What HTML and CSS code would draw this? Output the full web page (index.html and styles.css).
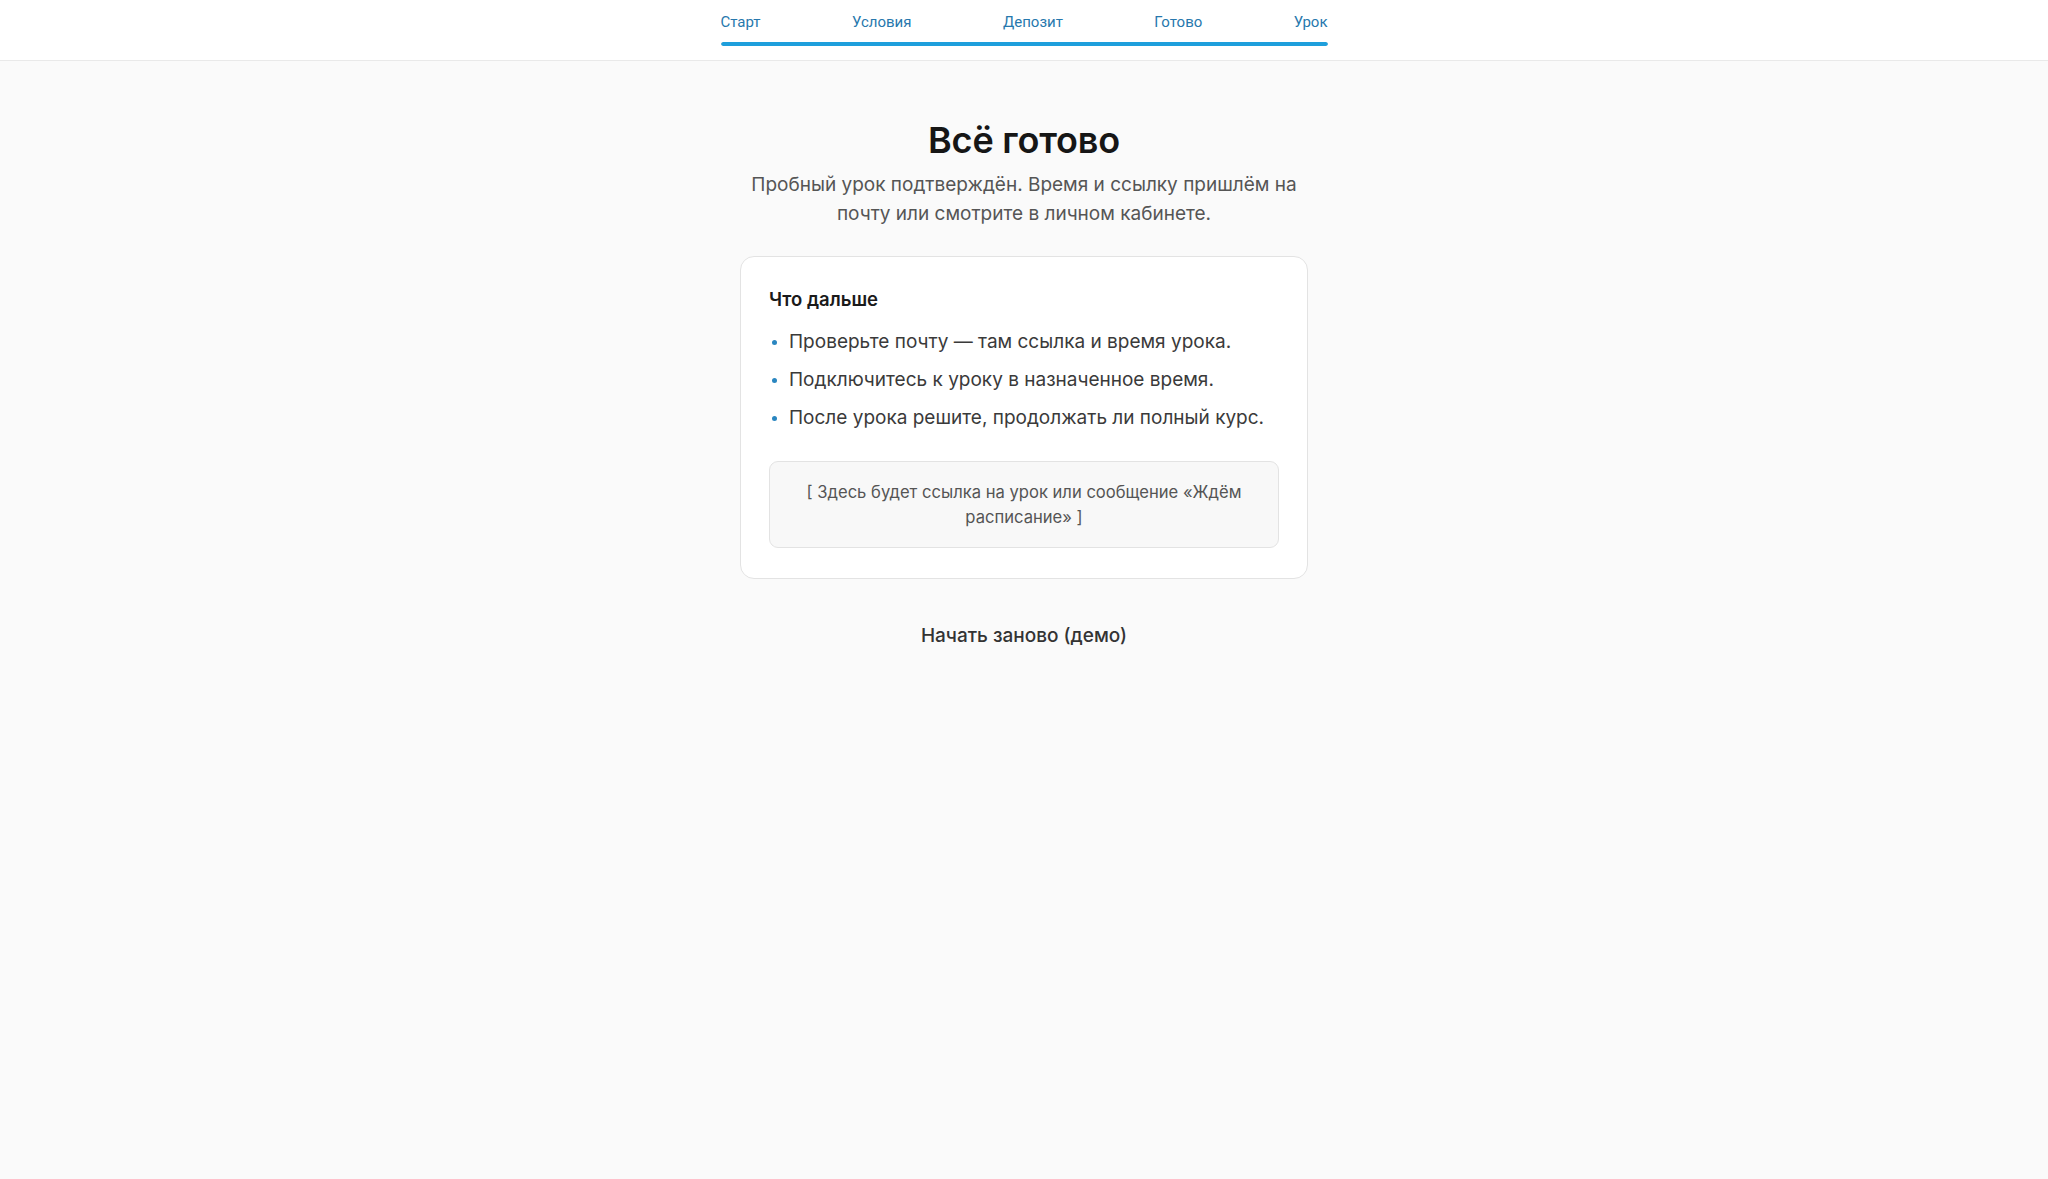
FILE: index.html
```html
<!DOCTYPE html>
<html lang="ru">
<head>
<meta charset="utf-8">
<title>Всё готово</title>
<link rel="stylesheet" href="styles.css">
</head>
<body>
<header class="topbar">
  <nav class="steps">
    <div class="step-labels">
      <span class="step">Старт</span>
      <span class="step">Условия</span>
      <span class="step">Депозит</span>
      <span class="step">Готово</span>
      <span class="step">Урок</span>
    </div>
    <div class="progress"><div class="progress-fill"></div></div>
  </nav>
</header>
<main class="page">
  <h1 class="title">Всё готово</h1>
  <p class="subtitle">Пробный урок подтверждён. Время и ссылку пришлём на почту или смотрите в личном кабинете.</p>
  <section class="card">
    <h2 class="card-title">Что дальше</h2>
    <ul class="next-list">
      <li>Проверьте почту — там ссылка и время урока.</li>
      <li>Подключитесь к уроку в назначенное время.</li>
      <li>После урока решите, продолжать ли полный курс.</li>
    </ul>
    <div class="placeholder">[ Здесь будет ссылка на урок или сообщение «Ждём расписание» ]</div>
  </section>
  <button class="restart" type="button">Начать заново (демо)</button>
</main>
</body>
</html>
```

FILE: styles.css
```css
* { box-sizing: border-box; }
html, body { margin: 0; padding: 0; }
body {
  background: #fafafa;
  font-family: Inter, "Noto Sans", sans-serif;
  color: #1a1a1a;
  min-height: 100vh;
}
.topbar {
  background: #ffffff;
  border-bottom: 1px solid #e9e9e9;
  height: 61px;
  display: flex;
  justify-content: center;
}
.steps {
  width: 607px;
  padding-top: 13px;
}
.step-labels {
  display: flex;
  justify-content: space-between;
  font-family: Roboto, "Noto Sans", sans-serif;
  font-size: 15px;
  line-height: 19px;
  color: #2778ad;
}
.progress {
  margin-top: 10px;
  height: 4px;
  border-radius: 2px;
  background: #e6e6e6;
  overflow: hidden;
}
.progress-fill {
  width: 100%;
  height: 100%;
  background: #1e9fdc;
  border-radius: 2px;
}
.page {
  display: flex;
  flex-direction: column;
  align-items: center;
  padding-top: 57px;
}
.title {
  margin: 0;
  font-size: 36px;
  line-height: 44px;
  font-weight: 600;
  color: #161616;
  letter-spacing: -0.2px;
}
.subtitle {
  margin: 8px 0 0;
  max-width: 560px;
  text-align: center;
  font-size: 19px;
  line-height: 29px;
  color: #555555;
}
.card {
  margin-top: 28px;
  width: 568px;
  background: #ffffff;
  border: 1px solid #e3e3e3;
  border-radius: 14px;
  padding: 29px 28px 30px;
}
.card-title {
  margin: 0;
  font-size: 18.5px;
  line-height: 26px;
  font-weight: 600;
  color: #1a1a1a;
}
.next-list {
  list-style: none;
  margin: 16px 0 0;
  padding: 0;
  display: flex;
  flex-direction: column;
  gap: 10px;
}
.next-list li {
  position: relative;
  padding-left: 20px;
  font-size: 19px;
  line-height: 28px;
  color: #3a3a3a;
}
.next-list li::before {
  content: "";
  position: absolute;
  left: 3px;
  top: 12px;
  width: 5px;
  height: 5px;
  border-radius: 50%;
  background: #2a86c0;
}
.placeholder {
  margin-top: 29px;
  background: #f8f8f8;
  border: 1px solid #e3e3e3;
  border-radius: 9px;
  padding: 18px 18px 17px;
  text-align: center;
  font-size: 16.6px;
  line-height: 25px;
  color: #555555;
}
.restart {
  margin-top: 43px;
  background: transparent;
  border: none;
  padding: 0;
  font-family: Inter, "Noto Sans", sans-serif;
  font-size: 19px;
  line-height: 28px;
  font-weight: 500;
  color: #333333;
  cursor: pointer;
}
```
